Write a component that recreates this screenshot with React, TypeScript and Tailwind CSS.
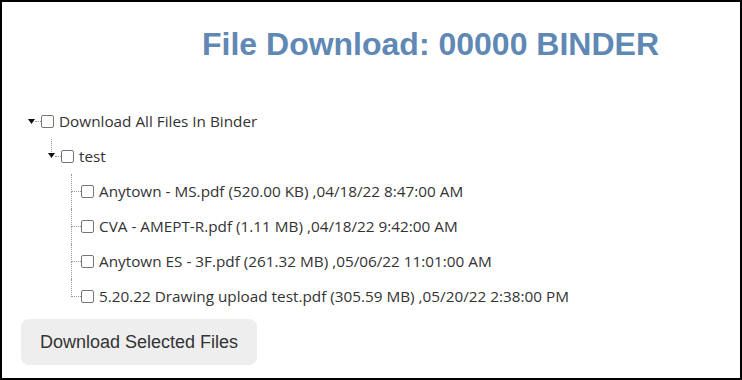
import React from "react";

const files = [
  "Anytown - MS.pdf (520.00 KB) ,04/18/22 8:47:00 AM",
  "CVA - AMEPT-R.pdf (1.11 MB) ,04/18/22 9:42:00 AM",
  "Anytown ES - 3F.pdf (261.32 MB) ,05/06/22 11:01:00 AM",
  "5.20.22 Drawing upload test.pdf (305.59 MB) ,05/20/22 2:38:00 PM",
];

function Tri() {
  return (
    <svg width="7" height="5" viewBox="0 0 7 5" className="block shrink-0">
      <polygon points="0,0 7,0 3.5,5" fill="#111" />
    </svg>
  );
}

function Box() {
  return <span className="block w-[13px] h-[13px] shrink-0 border border-[#767676] rounded-[2px] bg-white" />;
}

export default function App() {
  return (
    <div className="w-[742px] h-[380px] border-2 border-black bg-white overflow-hidden">
      <h1 className="pt-[24px] pl-[200px] text-[32px] leading-[37px] font-bold text-[#5f88b4] whitespace-nowrap [font-family:'Liberation_Sans',Arial,sans-serif]">
        File Download: 00000 BINDER
      </h1>
      <div className="mt-[41px] text-[15.3px] text-[#333] [font-family:'Open_Sans','Noto_Sans',sans-serif]">
        <div className="h-[35px] flex items-center pl-[26px]">
          <Tri />
          <span className="w-[6px] border-t border-dotted border-[#999]" />
          <Box />
          <span className="ml-[5px] whitespace-nowrap">Download All Files In Binder</span>
        </div>
        <div className="h-[35px] flex items-center pl-[46px]">
          <div className="flex flex-col items-center h-full w-[7px] shrink-0">
            <span className="h-[13px] w-0 border-l border-dotted border-[#999]" />
            <div className="mt-[1px]"><Tri /></div>
          </div>
          <span className="w-[6px] border-t border-dotted border-[#999]" />
          <Box />
          <span className="ml-[5px]">test</span>
        </div>
        {files.map((f, i) => (
          <div key={f} className="h-[35px] flex items-center pl-[69px]">
            <div className="flex flex-col h-full w-[10px] shrink-0">
              <span className="flex-1 border-l border-b border-dotted border-[#999]" />
              <span className={i === files.length - 1 ? "flex-1" : "flex-1 border-l border-dotted border-[#999]"} />
            </div>
            <Box />
            <span className="ml-[5px] whitespace-nowrap">{f}</span>
          </div>
        ))}
      </div>
      <button className="mt-[5px] ml-[19px] w-[236px] h-[46px] rounded-lg bg-[#eeeeee] text-[18px] text-[#333] [font-family:'Liberation_Sans',Arial,sans-serif]">
        Download Selected Files
      </button>
    </div>
  );
}
